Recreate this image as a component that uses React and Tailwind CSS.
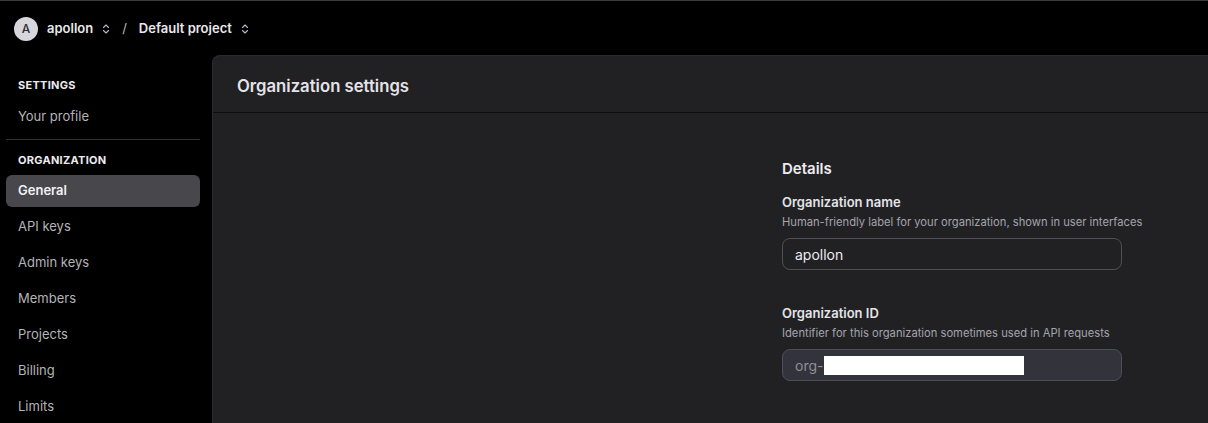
import React from 'react';

function UpDown() {
  return (
    <svg width="12" height="12" viewBox="0 0 24 24" fill="none" stroke="currentColor" strokeWidth="2.2" strokeLinecap="round" strokeLinejoin="round">
      <path d="m7 15 5 5 5-5" />
      <path d="m7 9 5-5 5 5" />
    </svg>
  );
}

const navItems = ['General', 'API keys', 'Admin keys', 'Members', 'Projects', 'Billing', 'Limits'];

export default function App() {
  return (
    <div className="h-[423px] w-[1208px] overflow-hidden bg-black border-t border-[#3b3b3f] flex flex-col" style={{ fontFamily: 'Inter, "Noto Sans", sans-serif' }}>
      {/* Top bar */}
      <div className="h-[54px] shrink-0 flex items-center pt-[2px] pl-[14px] text-[13px] font-semibold text-[#e8e8ec]">
        <div className="w-6 h-6 rounded-full bg-[#d6d6dc] text-[#2b2b30] flex items-center justify-center text-[12px] font-medium">A</div>
        <span className="ml-[9px]">apollon</span>
        <span className="ml-[7px] text-[#b8b8be]"><UpDown /></span>
        <span className="ml-[10px] text-[#b8b8be] font-normal">/</span>
        <span className="ml-[12px]">Default project</span>
        <span className="ml-[7px] text-[#b8b8be]"><UpDown /></span>
      </div>

      <div className="flex flex-1 min-h-0">
        {/* Sidebar */}
        <div className="w-[212px] shrink-0 pl-[6px] pr-[12px] pt-[20px]">
          <div className="px-3 text-[11px] font-bold tracking-wide text-[#ececf0] h-5 flex items-center">SETTINGS</div>
          <div className="px-3 mt-[12px] text-[13px] text-[#b4b4ba] h-5 flex items-center">Your profile</div>
          <div className="mt-[12px] border-t border-[#2e2e33]" />
          <div className="px-3 mt-[10px] text-[11px] font-bold tracking-wide text-[#ececf0] h-5 flex items-center">ORGANIZATION</div>
          <div className="mt-[5px] flex flex-col gap-1">
            {navItems.map((item, i) => (
              <div
                key={item}
                className={
                  i === 0
                    ? 'h-8 rounded-md bg-[#47474c] px-3 flex items-center text-[13px] font-semibold text-[#f2f2f5]'
                    : 'h-8 rounded-md px-3 flex items-center text-[13px] text-[#b4b4ba]'
                }
              >
                {item}
              </div>
            ))}
          </div>
        </div>

        {/* Main panel */}
        <div className="flex-1 bg-[#212124] rounded-tl-lg border-l border-t border-[#2c2c30]">
          <div className="h-[57px] flex items-center pt-[5px] px-6 border-b border-[#0e0e10]">
            <h1 className="text-[16.7px] font-semibold text-[#e4e4e8]">Organization settings</h1>
          </div>
          <div className="flex pt-[46px]">
            <div className="w-[569px] shrink-0" />
            <div className="w-[380px]">
              <h2 className="text-[15px] font-semibold text-[#ececf0] leading-5">Details</h2>

              <div className="mt-[13px]">
                <div className="text-[13px] font-semibold text-[#e4e4e8] leading-5">Organization name</div>
                <div className="mt-[1px] text-[11.2px] text-[#a4a4ac] leading-[18px]">Human-friendly label for your organization, shown in user interfaces</div>
                <div className="mt-[7px] w-[340px] h-8 rounded-lg border border-[#4e4e56] flex items-center px-3 text-[14px] text-[#ececf0]">apollon</div>
              </div>

              <div className="mt-[33px]">
                <div className="text-[13px] font-semibold text-[#e4e4e8] leading-5">Organization ID</div>
                <div className="mt-[1px] text-[11.2px] text-[#a4a4ac] leading-[18px]">Identifier for this organization sometimes used in API requests</div>
                <div className="mt-[7px] w-[340px] h-8 rounded-lg border border-[#4e4e56] bg-[#33343b] flex items-center px-3 text-[14px] text-[#8e8e96]">
                  <span>org-</span>
                  <span className="w-[200px] h-[19px] bg-white ml-[1px]" />
                </div>
              </div>
            </div>
          </div>
        </div>
      </div>
    </div>
  );
}
